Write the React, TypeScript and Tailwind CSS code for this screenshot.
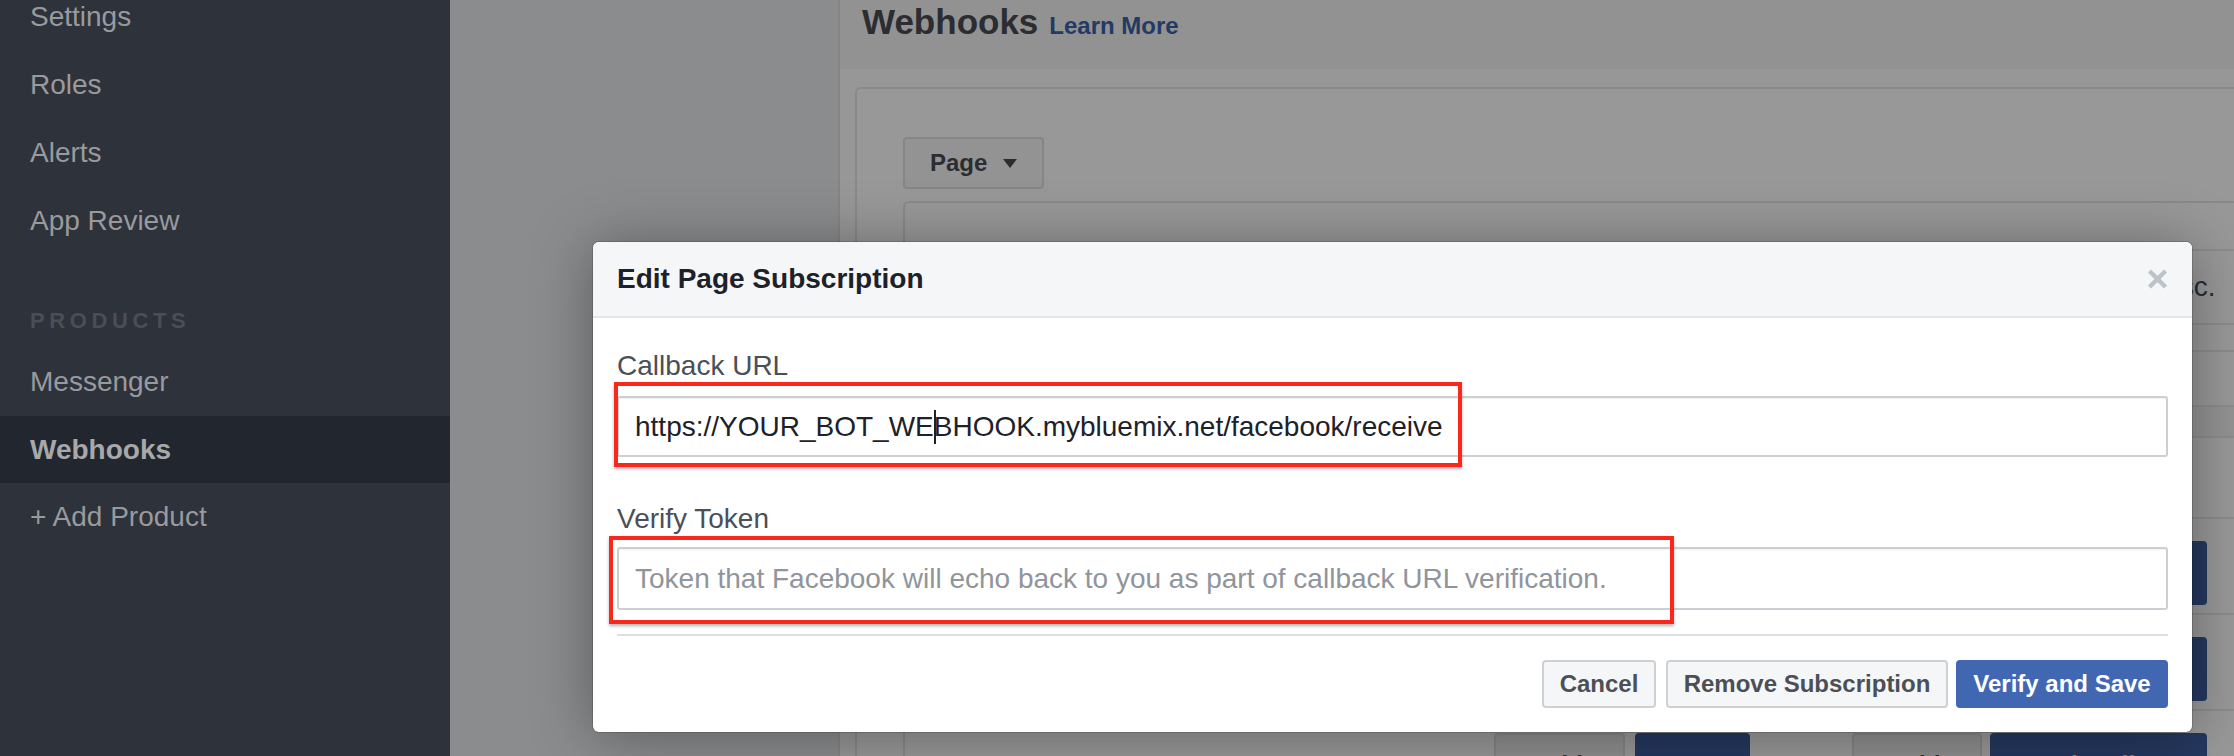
import React from "react";

function Caret() {
  return (
    <svg width="14" height="9" viewBox="0 0 14 9" className="ml-[16px]">
      <path d="M0 0 L14 0 L7 9 Z" fill="#2b2d31" />
    </svg>
  );
}

function BgButtonsRow({ last = false }: { last?: boolean }) {
  return (
    <div className={"h-[96px] flex items-start pt-[22px] pl-[589px] " + (last ? "" : "border-b-2 border-[#8c8c8c]")}>
      <div className="w-[131px] h-[64px] shrink-0 rounded-[4px] border-2 border-[#858585] bg-[#8f8f8f] flex items-center justify-center text-[24px] font-bold text-[#2b2d31]">Add</div>
      <div className="w-[115px] h-[64px] shrink-0 ml-[10px] rounded-[4px] bg-[#25385f] flex items-center justify-center text-[24px] font-bold text-[#8c8c8c]">Test</div>
      <div className="w-[130px] h-[64px] shrink-0 ml-[102px] rounded-[4px] border-2 border-[#858585] bg-[#8f8f8f] flex items-center justify-center text-[24px] font-bold text-[#2b2d31]">Add</div>
      <div className="w-[217px] h-[64px] shrink-0 ml-[8px] rounded-[4px] bg-[#25385f] flex items-center justify-center text-[24px] font-bold text-[#8c8c8c]">Subscribe</div>
    </div>
  );
}

export default function App() {
  return (
    <div className="relative w-[2234px] h-[756px] overflow-hidden flex font-['Liberation_Sans',Arial,sans-serif]">
      {/* Sidebar */}
      <aside className="w-[450px] shrink-0 bg-[#2e323b] flex flex-col text-[28px] text-[#999a9d]">
        <div className="-mt-[17px] flex flex-col">
          {["Settings", "Roles", "Alerts", "App Review"].map((t) => (
            <div key={t} className="h-[68px] flex items-center pl-[30px]">
              {t}
            </div>
          ))}
        </div>
        <div className="h-[37px]" />
        <div className="h-[56px] flex items-center pl-[30px] text-[22px] font-bold tracking-[0.21em] text-[#4a4e56]">
          PRODUCTS
        </div>
        <div className="h-[68px] flex items-center pl-[30px]">Messenger</div>
        <div className="h-[67px] flex items-center pl-[30px] bg-[#22262e] font-bold text-[#a7a8aa]">Webhooks</div>
        <div className="h-[68px] flex items-center pl-[30px]">+ Add Product</div>
      </aside>

      {/* Main background page */}
      <div className="flex-1 flex bg-[#8b8c8e] min-w-0">
        <div className="w-[388px] shrink-0" />
        <div className="flex-1 min-w-0 border-l-2 border-[#858586] bg-[#979797] flex flex-col">
          <div className="h-[69px] shrink-0 bg-[#929292] pl-[22px] pt-[2px] flex items-baseline gap-[11px] leading-[40px]">
            <span className="text-[35px] font-bold text-[#2b2d31]">Webhooks</span>
            <span className="text-[24px] font-bold text-[#233a64]">Learn More</span>
          </div>
          <div className="mt-[18px] ml-[15px] -mr-[40px] flex-1 border-2 border-[#898989] rounded-[6px] bg-[#989898] pt-[48px] pl-[46px] flex flex-col">
            <div className="w-[141px] h-[52px] rounded-[4px] border-2 border-[#868686] bg-[#939393] flex items-center pl-[25px] text-[24px] font-bold text-[#2b2d31]">
              Page
              <Caret />
            </div>
            <div className="mt-[12px] flex-1 border-l-2 border-t-2 border-[#898989] rounded-tl-[6px] flex flex-col">
              <div className="h-[48px] border-b-2 border-[#8c8c8c]" />
              <div className="h-[74px] border-b-2 border-[#8c8c8c] flex items-center pl-[1239px] text-[28px] text-[#2b2d31]">
                Desc.
              </div>
              <div className="h-[27px] border-b-2 border-[#8c8c8c]" />
              <div className="h-[55px] border-b-2 border-[#8c8c8c]" />
              <div className="h-[31px] border-b-2 border-[#8c8c8c] bg-[#939393]" />
              <div className="h-[81px] border-b-2 border-[#8c8c8c]" />
              <BgButtonsRow />
              <BgButtonsRow />
              <BgButtonsRow last />
            </div>
          </div>
        </div>
      </div>

      {/* Modal */}
      <div className="absolute left-[593px] top-[242px] w-[1599px] h-[490px] bg-white rounded-[6px] overflow-hidden flex flex-col shadow-[0_0_0_1px_rgba(0,0,0,0.15),0_4px_60px_rgba(0,0,0,0.35)]">
        <div className="h-[76px] shrink-0 bg-[#f5f6f7] border-b-2 border-[#e5e5e5] flex items-center justify-between px-[24px]">
          <h2 className="text-[28px] font-bold text-[#1d2129]">Edit Page Subscription</h2>
          <svg width="21" height="20" viewBox="0 0 21 20">
            <path d="M2.5 2 L18.5 18 M18.5 2 L2.5 18" stroke="#bec3c9" strokeWidth="4.5" strokeLinecap="butt" />
          </svg>
        </div>
        <div className="flex flex-col px-[24px] pt-[31px]">
          <div className="text-[28px] leading-[34px] text-[#4b4f56]">Callback URL</div>
          <div className="mt-[13px] h-[61px] border-2 border-[#ccd0d5] rounded-[3px] flex items-center pl-[16px] text-[28px] text-[#1d2129] shadow-[inset_0_1px_1px_rgba(0,0,0,0.06)]">
            <span className="whitespace-pre">https://YOUR_BOT_WE</span>
            <span className="inline-block w-[2px] h-[34px] bg-[#1d2129] -mr-[2px] relative z-10" />
            <span className="whitespace-pre">BHOOK.mybluemix.net/facebook/receive</span>
          </div>
          <div className="mt-[45px] text-[28px] leading-[34px] text-[#4b4f56]">Verify Token</div>
          <div className="mt-[11px] h-[63px] border-2 border-[#ccd0d5] rounded-[3px] flex items-center pl-[16px] text-[28px] text-[#90949c] shadow-[inset_0_1px_1px_rgba(0,0,0,0.06)]">
            Token that Facebook will echo back to you as part of callback URL verification.
          </div>
          <div className="mt-[24px] h-[2px] bg-[#dddfe2]" />
          <div className="mt-[24px] flex justify-end">
            <button className="w-[114px] h-[48px] rounded-[4px] border-2 border-[#ced0d4] bg-[#f5f6f7] text-[24px] font-bold text-[#4b4f56]">
              Cancel
            </button>
            <button className="ml-[10px] w-[282px] h-[48px] rounded-[4px] border-2 border-[#ced0d4] bg-[#f5f6f7] text-[24px] font-bold text-[#4b4f56]">
              Remove Subscription
            </button>
            <button className="ml-[8px] w-[212px] h-[48px] rounded-[4px] bg-[#4267b2] text-[24px] font-bold text-white">
              Verify and Save
            </button>
          </div>
        </div>
      </div>

      {/* Red annotation boxes */}
      <div className="absolute left-[614px] top-[382px] w-[848px] h-[85px] border-4 border-[#f9281d] shadow-[0_2px_3px_rgba(0,0,0,0.3)]" />
      <div className="absolute left-[609px] top-[536px] w-[1065px] h-[88px] border-4 border-[#f9281d] shadow-[0_2px_3px_rgba(0,0,0,0.3)]" />
    </div>
  );
}
